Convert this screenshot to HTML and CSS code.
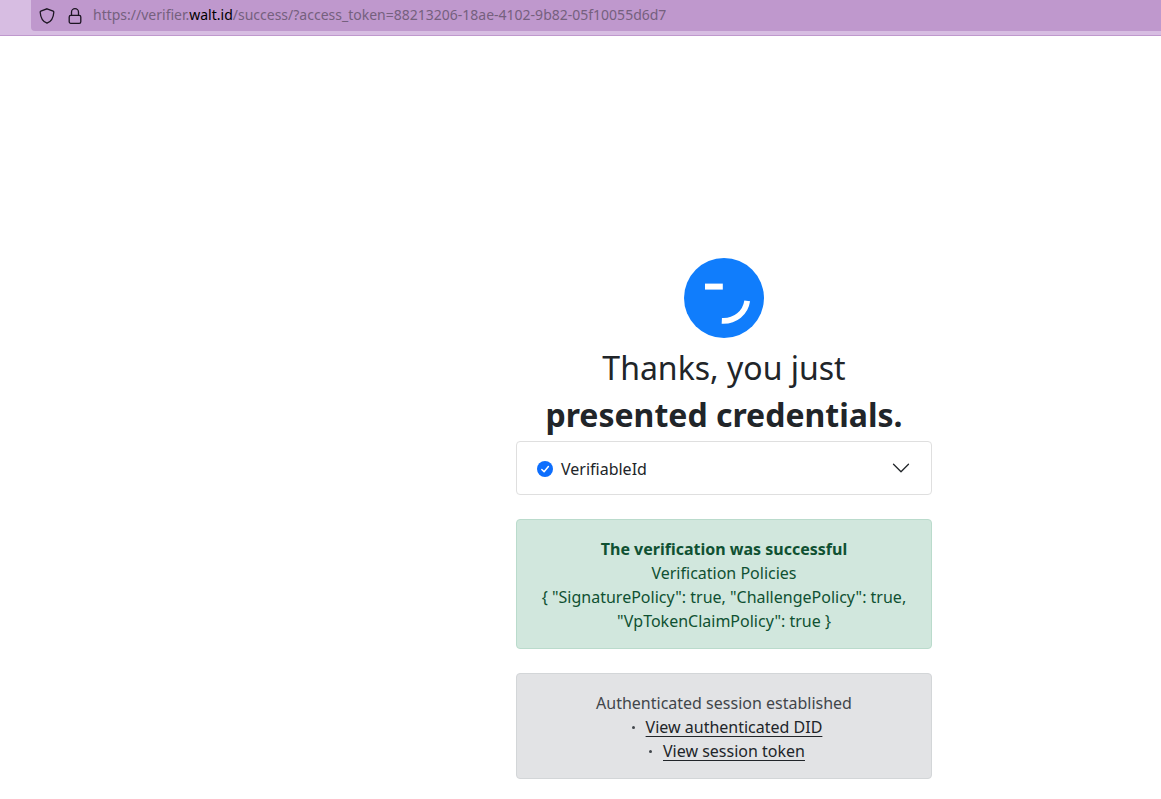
FILE: index.html
```html
<!DOCTYPE html>
<html lang="en">
<head>
<meta charset="utf-8">
<title>walt.id Verifier</title>
<link rel="stylesheet" href="styles.css">
</head>
<body>
<header class="toolbar">
  <div class="address">
    <svg class="address-icon" viewBox="0 0 16 16" aria-hidden="true"><path d="M8 .8 14.2 3.1Q14.9 3.4 14.8 4.2C14.5 9 12.5 13.500 8 15.2C3.500 13.500 1.500 9 1.200 4.200Q1.100 3.400 1.800 3.100Z"/></svg>
    <svg class="address-icon" viewBox="0 0 16 16" aria-hidden="true"><rect x="2.200" y="7.300" width="11.600" height="8" rx="1.600"/><path d="M4.500 7.300V4.200a3.500 3.500 0 0 1 7 0v3.100"/></svg>
    <div class="url" role="textbox" aria-label="Address" aria-readonly="true">https://verifier.<span class="url-host">walt.id</span>/success/?access_token=88213206-18ae-4102-9b82-05f10055d6d7</div>
  </div>
</header>
<main class="page">
  <div class="content">
    <svg class="logo" viewBox="0 0 80 80" role="img" aria-label="walt.id"><circle cx="40" cy="40" r="40" fill="#107dfc"/><path d="M21 25.600H38.800V31.600H21Z" fill="#fff"/><path d="M63.200 42.800C61.500 54.500 51.500 63.500 37.800 62.800" fill="none" stroke="#fff" stroke-width="5.800"/></svg>
    <h1 class="title">Thanks, you just<br><strong>presented credentials.</strong></h1>
    <button class="credential" type="button" aria-expanded="false">
      <svg class="check" viewBox="0 0 16 16" aria-hidden="true"><circle cx="8" cy="8" r="8" fill="#0d6efd"/><path d="m4.800 8.500 2.300 2.300 4.300-5.300" fill="none" stroke="#fff" stroke-width="1.500" stroke-linecap="round" stroke-linejoin="round"/></svg>
      <span class="credential-name">VerifiableId</span>
      <svg class="chevron" viewBox="0 0 20 20" aria-hidden="true"><path d="m2.500 5.200 7.500 7.500 7.500-7.500"/></svg>
    </button>
    <section class="alert alert-success">
      <strong>The verification was successful</strong>
      <p>Verification Policies</p>
      <p>{ "SignaturePolicy": true, "ChallengePolicy": true, "VpTokenClaimPolicy": true }</p>
    </section>
    <section class="alert alert-session">
      <p>Authenticated session established</p>
      <ul class="links">
        <li><a href="#did">View authenticated DID</a></li>
        <li><a href="#token">View session token</a></li>
      </ul>
    </section>
  </div>
</main>
</body>
</html>
```
FILE: styles.css
```css
* { box-sizing: border-box; }

body {
  margin: 0;
  background: #fff;
  color: #212529;
  font: 16px/24px "Noto Sans", sans-serif;
}

.toolbar {
  padding: 0 0 4px 31px;
  background: #d7bde2;
  border-bottom: 1px solid #bf98cd;
}

.address {
  display: flex;
  align-items: center;
  gap: 12px;
  height: 31px;
  padding: 0 8px;
  background: #bf98cd;
  border-radius: 0 0 0 4px;
}

.address-icon {
  flex: none;
  width: 16px;
  height: 16px;
  fill: none;
  stroke: #1c1522;
  stroke-width: 1.3;
}

.url {
  overflow: hidden;
  margin-left: -2px;
  padding-bottom: 2px;
  color: #75607e;
  font-size: 14px;
  line-height: 20px;
  white-space: nowrap;
}

.url-host { color: #000; }

.page {
  display: flex;
  justify-content: center;
  padding: 222px 0 20px 287px;
}

.content {
  display: flex;
  flex-direction: column;
  align-items: stretch;
  width: 100%;
  max-width: 416px;
}

.logo {
  align-self: center;
  width: 80px;
  height: 80px;
}

.title {
  margin: 6px 0 3px;
  font-size: 32px;
  font-weight: 400;
  line-height: 47px;
  text-align: center;
}

.title strong { font-weight: 700; }

.credential {
  display: flex;
  align-items: center;
  gap: 8px;
  padding: 15px 20px 13px;
  background: #fff;
  border: 1px solid #dfdfdf;
  border-radius: 4px;
  color: inherit;
  font: inherit;
  text-align: left;
}

.check {
  width: 16px;
  height: 16px;
}

.credential-name { flex: 1; }

.chevron {
  width: 20px;
  height: 20px;
  fill: none;
  stroke: #212529;
  stroke-width: 1.3;
  stroke-linecap: round;
  stroke-linejoin: round;
}

.alert {
  margin-top: 24px;
  padding: 17px 16px 15px;
  border: 1px solid;
  border-radius: 4px;
  text-align: center;
}

.alert p { margin: 0; }

.alert-success {
  background: #d1e7dd;
  border-color: #badbcc;
  color: #0f5132;
}

.alert-session {
  background: #e2e3e5;
  border-color: #d3d6d8;
  color: #41464b;
}

.links {
  margin: 0;
  padding: 0;
  list-style: none;
}

.links li {
  display: flex;
  align-items: center;
  justify-content: center;
}

.links li::before {
  content: "";
  width: 3px;
  height: 3px;
  margin: 0 11px 0 6px;
  background: #41464b;
  border-radius: 50%;
}

.links a {
  color: #212529;
  text-underline-offset: 3px;
}
```
